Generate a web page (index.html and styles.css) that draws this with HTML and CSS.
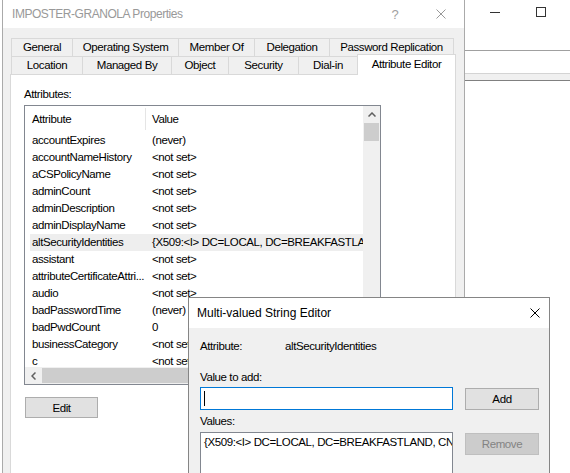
FILE: index.html
```html
<!DOCTYPE html>
<html lang="en">
<head>
    <meta charset="UTF-8">
    <title>IMPOSTER-GRANOLA Properties</title>
    <link rel="stylesheet" href="styles.css">
</head>
<body>
    <div class="desktop">
        <!-- window behind, only its right edge shows -->
        <div class="back-window">
            <div class="back-title">
                <span class="cap">
                    <svg width="10" height="10" viewBox="0 0 10 10"><path d="M0 5.5 H10" stroke="#333" stroke-width="1" fill="none"/></svg>
                </span>
                <span class="cap">
                    <svg width="10" height="10" viewBox="0 0 10 10"><rect x="0.5" y="0.5" width="9" height="9" stroke="#333" stroke-width="1" fill="none"/></svg>
                </span>
                <span class="cap"></span>
            </div>
            <div class="back-toolbar"></div>
            <div class="back-band"></div>
        </div>

        <div class="props">
            <div class="titlebar">
                <span class="title">IMPOSTER-GRANOLA Properties</span>
                <span class="cap help">?</span>
                <span class="cap">
                    <svg width="10" height="10" viewBox="0 0 10 10"><path d="M0.5 0.5 L9.5 9.5 M9.5 0.5 L0.5 9.5" stroke="#999" stroke-width="1" fill="none"/></svg>
                </span>
            </div>

            <div class="tabs">
                <div class="tab-row">
                    <div class="tab t-general">General</div>
                    <div class="tab t-os">Operating System</div>
                    <div class="tab t-member">Member Of</div>
                    <div class="tab t-deleg">Delegation</div>
                    <div class="tab t-pwrep">Password Replication</div>
                </div>
                <div class="tab-row">
                    <div class="tab t-location">Location</div>
                    <div class="tab t-managed">Managed By</div>
                    <div class="tab t-object">Object</div>
                    <div class="tab t-security">Security</div>
                    <div class="tab t-dialin">Dial-in</div>
                    <div class="tab t-attred active">Attribute Editor</div>
                </div>
            </div>

            <div class="page">
                <div class="label">Attributes:</div>
                <div class="listbox">
                    <div class="list-content">
                        <div class="list-header">
                            <span class="col-attr">Attribute</span>
                            <span class="col-val">Value</span>
                        </div>
                        <div class="row"><span class="name">accountExpires</span><span class="value">(never)</span></div>
                        <div class="row"><span class="name">accountNameHistory</span><span class="value">&lt;not set&gt;</span></div>
                        <div class="row"><span class="name">aCSPolicyName</span><span class="value">&lt;not set&gt;</span></div>
                        <div class="row"><span class="name">adminCount</span><span class="value">&lt;not set&gt;</span></div>
                        <div class="row"><span class="name">adminDescription</span><span class="value">&lt;not set&gt;</span></div>
                        <div class="row"><span class="name">adminDisplayName</span><span class="value">&lt;not set&gt;</span></div>
                        <div class="row hl"><span class="name">altSecurityIdentities</span><span class="value">{X509:&lt;I&gt; DC=LOCAL, DC=BREAKFASTLAN</span></div>
                        <div class="row"><span class="name">assistant</span><span class="value">&lt;not set&gt;</span></div>
                        <div class="row"><span class="name">attributeCertificateAttri...</span><span class="value">&lt;not set&gt;</span></div>
                        <div class="row"><span class="name">audio</span><span class="value">&lt;not set&gt;</span></div>
                        <div class="row"><span class="name">badPasswordTime</span><span class="value">(never)</span></div>
                        <div class="row"><span class="name">badPwdCount</span><span class="value">0</span></div>
                        <div class="row"><span class="name">businessCategory</span><span class="value">&lt;not set&gt;</span></div>
                        <div class="row"><span class="name">c</span><span class="value">&lt;not set&gt;</span></div>
                    </div>
                    <div class="vscroll">
                        <div class="arrow">
                            <svg width="8" height="5" viewBox="0 0 8 5"><path d="M0.5 4.5 L4 1 L7.5 4.5" stroke="#606060" stroke-width="1.5" fill="none"/></svg>
                        </div>
                        <div class="vthumb"></div>
                    </div>
                    <div class="hscroll">
                        <div class="arrow">
                            <svg width="5" height="8" viewBox="0 0 5 8"><path d="M4.5 0.5 L1 4 L4.5 7.5" stroke="#606060" stroke-width="1.5" fill="none"/></svg>
                        </div>
                        <div class="hthumb"></div>
                    </div>
                    <div class="corner"></div>
                </div>
                <button class="btn edit">Edit</button>
            </div>
        </div>

        <div class="dialog">
            <div class="dlg-title">
                <span class="dlg-caption">Multi-valued String Editor</span>
                <svg class="dlg-close" width="10" height="10" viewBox="0 0 10 10"><path d="M0.5 0.5 L9.5 9.5 M9.5 0.5 L0.5 9.5" stroke="#000" stroke-width="1" fill="none"/></svg>
            </div>
            <div class="dlg-body">
                <div class="field-row">
                    <span class="field-label">Attribute:</span>
                    <span>altSecurityIdentities</span>
                </div>
                <div class="label add-label">Value to add:</div>
                <div class="input-row">
                    <div class="textbox"><span class="caret"></span></div>
                    <button class="btn side-btn">Add</button>
                </div>
                <div class="label values-label">Values:</div>
                <div class="input-row values-row">
                    <div class="values-list">{X509:&lt;I&gt; DC=LOCAL, DC=BREAKFASTLAND, CN</div>
                    <button class="btn side-btn" disabled>Remove</button>
                </div>
            </div>
        </div>
    </div>
</body>
</html>
```

FILE: styles.css
```css
* {
    box-sizing: border-box;
}

body {
    margin: 0;
    width: 570px;
    height: 473px;
    overflow: hidden;
    background: #fff;
    font-family: "Liberation Sans", Arial, sans-serif;
    font-size: 11.5px;
    letter-spacing: -0.4px;
    color: #000;
}

.desktop {
    position: relative;
    width: 570px;
    height: 473px;
    overflow: hidden;
}

/* ---- background window ---- */
.back-window {
    position: absolute;
    left: 100px;
    top: 0;
    width: 510px;
    height: 473px;
    background: #fff;
}

.back-title {
    display: flex;
    justify-content: flex-end;
    height: 24px;
}

.back-title .cap {
    width: 46px;
    height: 24px;
    display: flex;
    align-items: center;
    justify-content: center;
}

.back-toolbar {
    height: 27px;
    border-bottom: 1px solid #a0a0a0;
}

.back-band {
    margin-top: 22px;
    height: 8px;
    background: #f0f0f0;
    border-top: 1px solid #d4d4d4;
    border-bottom: 1px solid #808080;
}

/* ---- properties window ---- */
.props {
    position: absolute;
    left: 2px;
    top: 0;
    width: 463px;
    height: 480px;
    background: #f0f0f0;
    border-left: 1px solid #aaa;
    border-right: 1px solid #aaa;
}

.titlebar {
    display: flex;
    align-items: center;
    height: 28px;
    background: #fff;
    padding-left: 9px;
}

.title {
    flex: 1;
    font-size: 12px;
    letter-spacing: -0.45px;
    color: #999;
}

.titlebar .cap {
    width: 46px;
    height: 28px;
    display: flex;
    align-items: center;
    justify-content: center;
}

.help {
    font-size: 13px;
    color: #a0a0a0;
    letter-spacing: 0;
}

.tabs {
    padding: 10px 0 0 9px;
}

.tab-row {
    display: flex;
    align-items: flex-start;
}

.tab {
    height: 18px;
    margin-left: -1px;
    border: 1px solid #d9d9d9;
    border-bottom: none;
    text-align: center;
    line-height: 17px;
    white-space: nowrap;
}

.tab.active {
    height: 21px;
    margin-top: -2px;
    margin-bottom: -1px;
    line-height: 18px;
    background: #fff;
    position: relative;
    z-index: 1;
}

.t-general { width: 62px; }
.t-os { width: 107px; }
.t-member { width: 77px; }
.t-deleg { width: 76px; }
.t-pwrep { width: 125px; }
.t-location { width: 72px; }
.t-managed { width: 90px; }
.t-object { width: 58px; }
.t-security { width: 71px; }
.t-dialin { width: 60px; }
.t-attred { width: 99px; }

.page {
    margin-left: 7px;
    width: 446px;
    height: 420px;
    border: 1px solid #d9d9d9;
    background: #fff;
    padding: 12px 0 0 13px;
}

.label {
    line-height: 14px;
    margin-bottom: 4px;
}

.listbox {
    width: 357px;
    height: 280px;
    border: 1px solid #828790;
    display: grid;
    grid-template-columns: 338px 17px;
    grid-template-rows: 261px 17px;
    background: #fff;
}

.list-content {
    overflow: hidden;
}

.list-header {
    display: flex;
    align-items: center;
    height: 26px;
}

.col-attr {
    width: 121px;
    padding-left: 7px;
    line-height: 22px;
    border-right: 1px solid #e5e5e5;
}

.col-val {
    padding-left: 6px;
}

.row {
    display: flex;
    height: 17px;
    line-height: 17px;
    margin-left: 5px;
    white-space: nowrap;
}

.row.hl {
    background: #eeeeee;
}

.row .name {
    width: 120px;
    padding-left: 2px;
    overflow: hidden;
    flex-shrink: 0;
}

.row .value {
    flex: 1;
    padding-left: 2px;
    overflow: hidden;
}

.vscroll {
    background: #f0f0f0;
}

.arrow {
    width: 17px;
    height: 17px;
    display: flex;
    align-items: center;
    justify-content: center;
}

.vthumb {
    width: 15px;
    height: 18px;
    margin-left: 1px;
    background: #cdcdcd;
}

.hscroll {
    display: flex;
    background: #f0f0f0;
}

.hthumb {
    width: 300px;
    height: 15px;
    margin-top: 1px;
    background: #cdcdcd;
}

.corner {
    background: #f0f0f0;
}

.btn {
    font-family: inherit;
    font-size: 11.5px;
    letter-spacing: -0.4px;
    color: #000;
    background: #e1e1e1;
    border: 1px solid #adadad;
    padding: 0;
    margin: 0;
}

.btn:disabled {
    background: #cccccc;
    border-color: #bfbfbf;
    color: #838383;
}

.edit {
    display: block;
    width: 73px;
    height: 21px;
    margin: 12px 0 0 1px;
}

/* ---- multi-valued string editor ---- */
.dialog {
    position: absolute;
    left: 188px;
    top: 297px;
    width: 362px;
    height: 200px;
    background: #f0f0f0;
    border: 1px solid #858585;
    z-index: 5;
}

.dlg-title {
    display: flex;
    align-items: center;
    height: 30px;
    background: #fff;
    padding: 0 9px 0 8px;
}

.dlg-caption {
    flex: 1;
    font-size: 12px;
    letter-spacing: 0;
}

.dlg-body {
    padding: 11px 0 0 11px;
}

.field-row {
    display: flex;
    line-height: 14px;
}

.field-label {
    width: 85px;
}

.add-label {
    margin-top: 17px;
    margin-bottom: 3px;
}

.input-row {
    display: flex;
    align-items: flex-start;
}

.textbox {
    width: 253px;
    height: 23px;
    background: #fff;
    border: 1px solid #0078d7;
    padding: 3px 0 0 3px;
}

.caret {
    display: block;
    width: 1px;
    height: 15px;
    background: #000;
}

.side-btn {
    width: 74px;
    height: 22px;
    margin: 1px 0 0 12px;
}

.values-label {
    margin-top: 4px;
    margin-bottom: 4px;
}

.values-list {
    width: 253px;
    height: 60px;
    background: #fff;
    border: 1px solid #828790;
    padding: 2px 3px;
    line-height: 14px;
    white-space: nowrap;
    overflow: hidden;
}
```
